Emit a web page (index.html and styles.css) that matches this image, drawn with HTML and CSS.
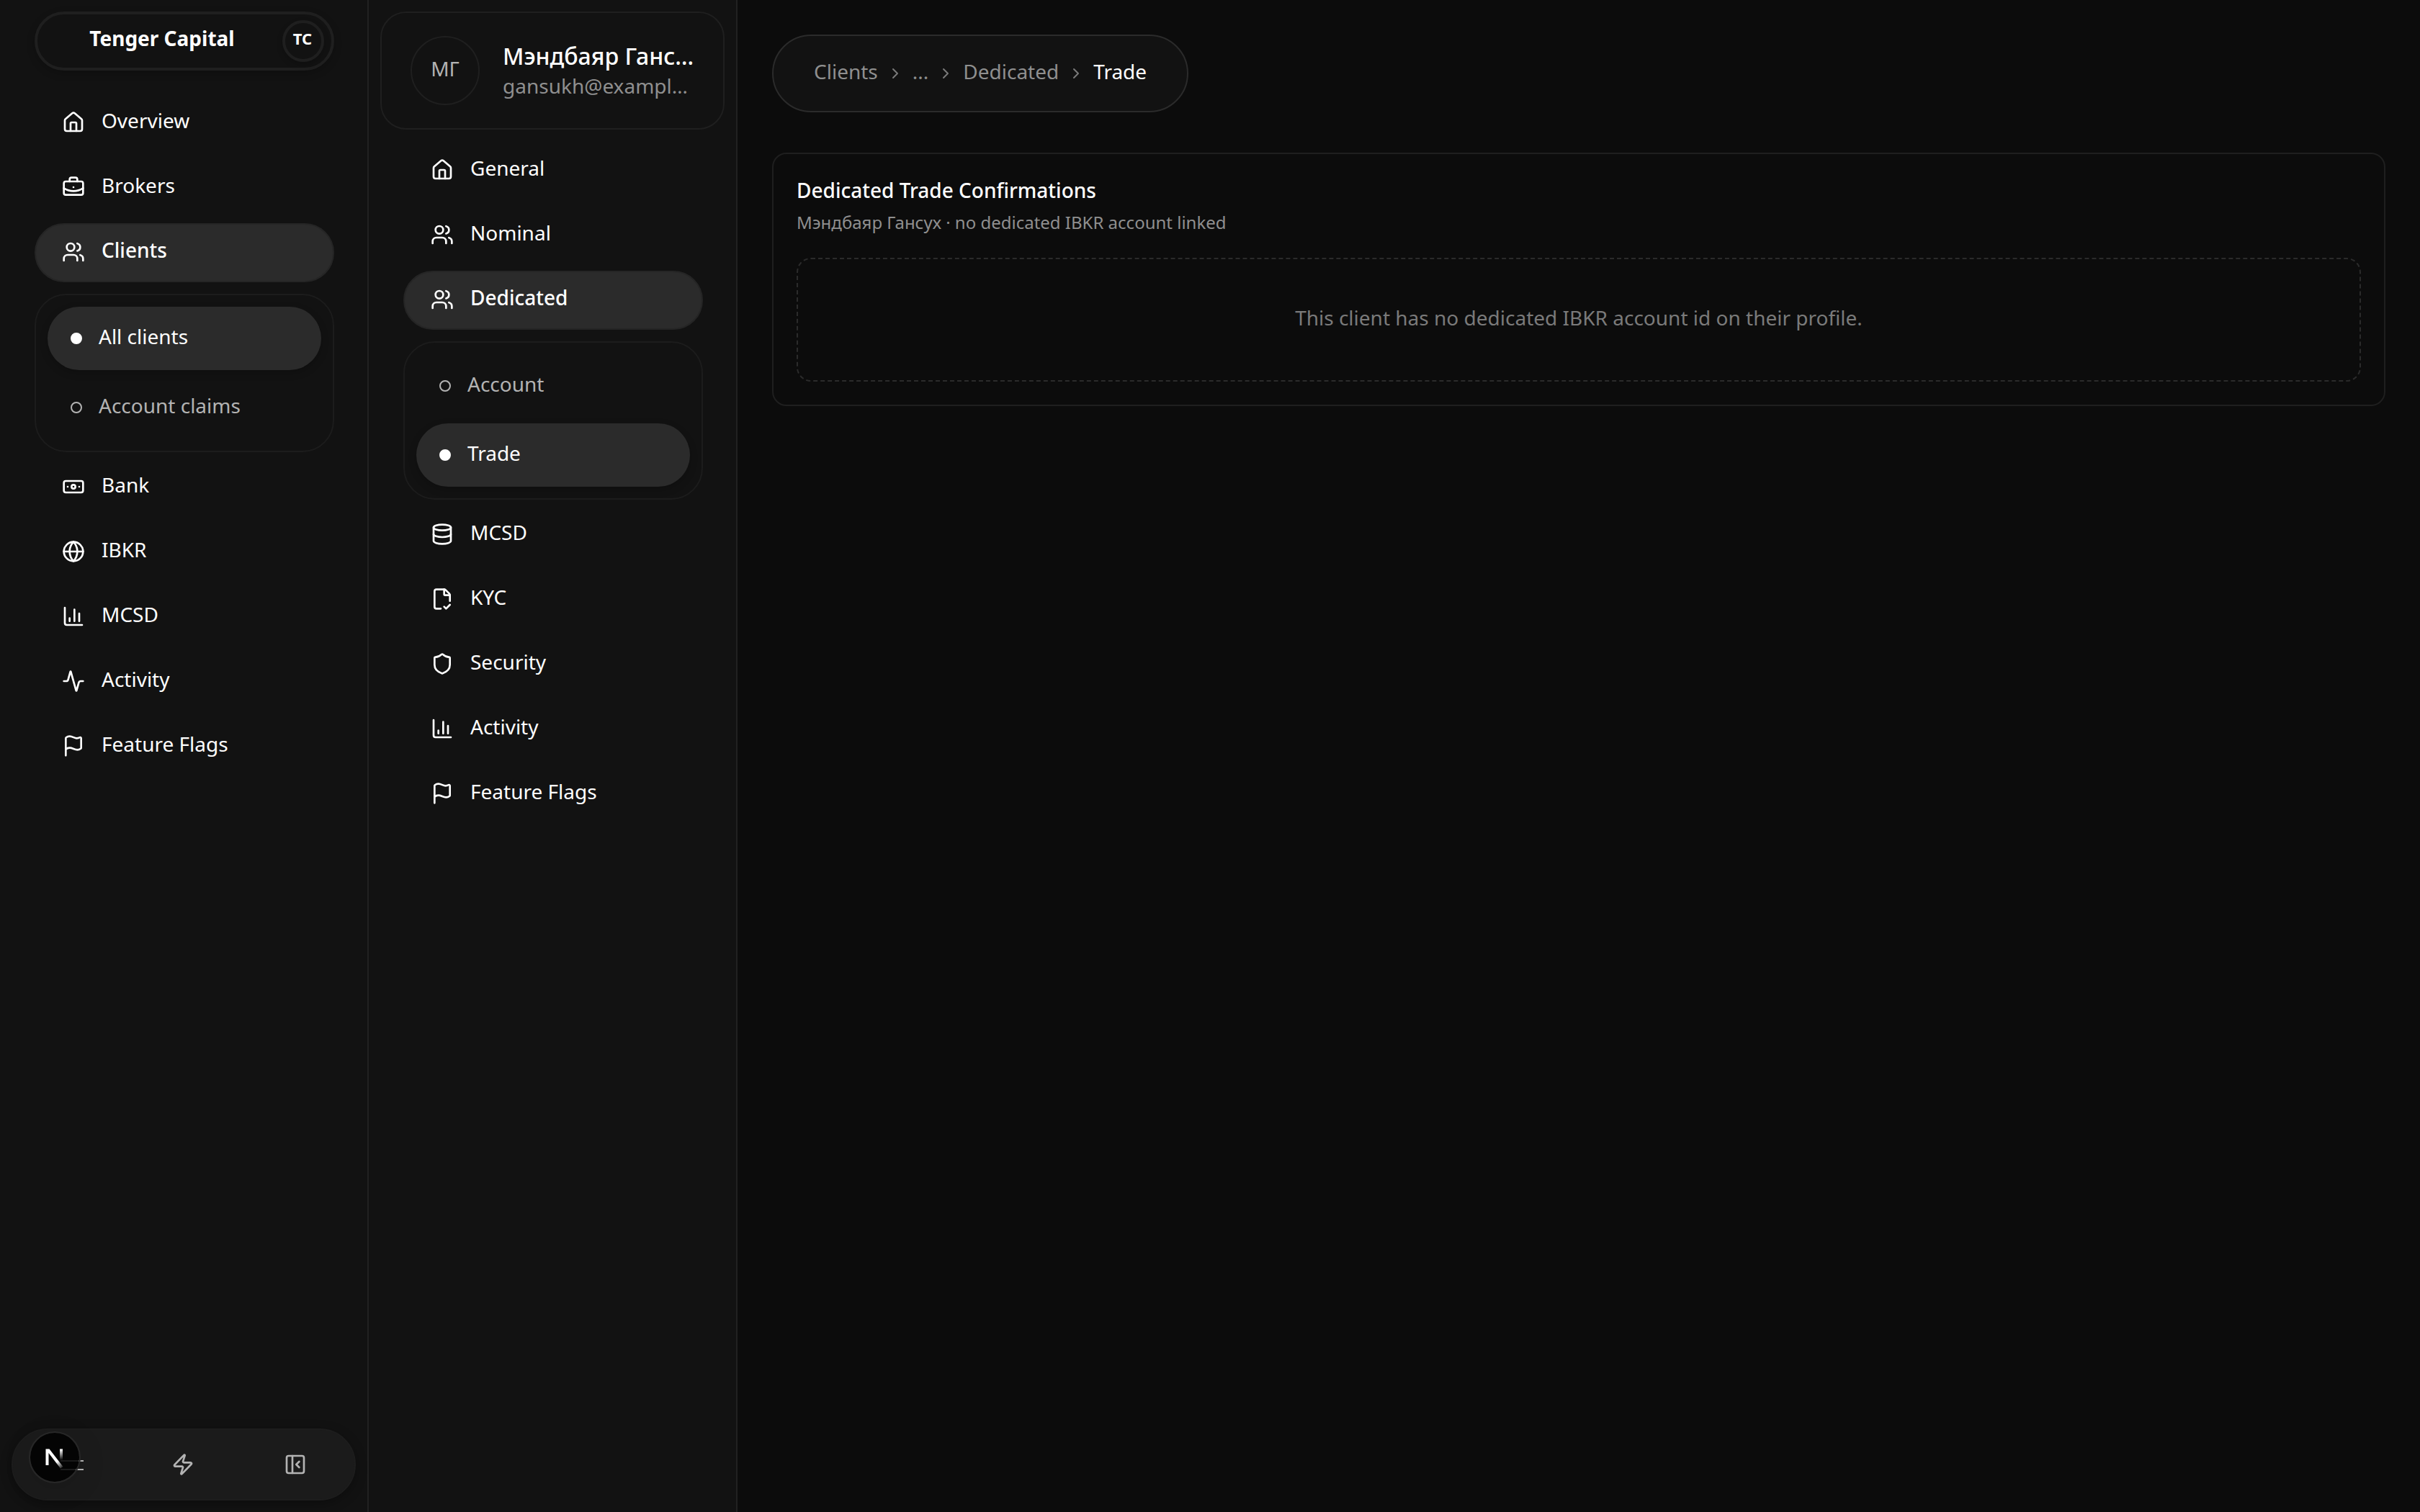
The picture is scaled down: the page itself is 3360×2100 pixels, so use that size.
FILE: index.html
```html
<!DOCTYPE html>
<html lang="en">

<head>
    <meta charset="UTF-8">
    <meta name="viewport" content="width=device-width, initial-scale=1.0">
    <title>Tenger Capital - Dedicated Trade</title>
    <link rel="stylesheet" href="styles.css">
</head>

<body>
    <!-- Shared icons -->
    <svg class="sprite" aria-hidden="true">
        <symbol id="house" viewBox="0 0 24 24">
            <path d="M15 21v-8a1 1 0 0 0-1-1h-4a1 1 0 0 0-1 1v8"/>
            <path d="M3 10a2 2 0 0 1 .709-1.528l7-5.999a2 2 0 0 1 2.582 0l7 5.999A2 2 0 0 1 21 10v9a2 2 0 0 1-2 2H5a2 2 0 0 1-2-2z"/>
        </symbol>
        <symbol id="briefcase" viewBox="0 0 24 24">
            <path d="M12 12h.01"/>
            <path d="M16 6V4a2 2 0 0 0-2-2h-4a2 2 0 0 0-2 2v2"/>
            <path d="M22 13a18.15 18.15 0 0 1-20 0"/>
            <rect width="20" height="14" x="2" y="6" rx="2"/>
        </symbol>
        <symbol id="users" viewBox="0 0 24 24">
            <path d="M16 21v-2a4 4 0 0 0-4-4H6a4 4 0 0 0-4 4v2"/>
            <circle cx="9" cy="7" r="4"/>
            <path d="M22 21v-2a4 4 0 0 0-3-3.87"/>
            <path d="M16 3.13a4 4 0 0 1 0 7.75"/>
        </symbol>
        <symbol id="banknote" viewBox="0 0 24 24">
            <rect width="20" height="12" x="2" y="6" rx="2"/>
            <circle cx="12" cy="12" r="2"/>
            <path d="M6 12h.01M18 12h.01"/>
        </symbol>
        <symbol id="globe" viewBox="0 0 24 24">
            <circle cx="12" cy="12" r="10"/>
            <path d="M12 2a14.5 14.5 0 0 0 0 20 14.5 14.5 0 0 0 0-20"/>
            <path d="M2 12h20"/>
        </symbol>
        <symbol id="chart" viewBox="0 0 24 24">
            <path d="M3 3v16a2 2 0 0 0 2 2h16"/>
            <path d="M18 17V9"/>
            <path d="M13 17V5"/>
            <path d="M8 17v-3"/>
        </symbol>
        <symbol id="activity" viewBox="0 0 24 24">
            <path d="M22 12h-2.48a2 2 0 0 0-1.93 1.46l-2.35 8.36a.25.25 0 0 1-.48 0L9.24 2.18a.25.25 0 0 0-.48 0l-2.35 8.36A2 2 0 0 1 4.49 12H2"/>
        </symbol>
        <symbol id="flag" viewBox="0 0 24 24">
            <path d="M4 22V4a1 1 0 0 1 .4-.8A6 6 0 0 1 8 2c3 0 5 2 7.333 2q2 0 3.067-.8A1 1 0 0 1 20 4v10a1 1 0 0 1-.4.8A6 6 0 0 1 16 16c-3 0-5-2-8-2a6 6 0 0 0-4 1.528"/>
        </symbol>
        <symbol id="database" viewBox="0 0 24 24">
            <ellipse cx="12" cy="5" rx="9" ry="3"/>
            <path d="M3 5v14a9 3 0 0 0 18 0V5"/>
            <path d="M3 12a9 3 0 0 0 18 0"/>
        </symbol>
        <symbol id="file-check" viewBox="0 0 24 24">
            <path d="M10.5 22H6a2 2 0 0 1-2-2V4a2 2 0 0 1 2-2h8a2.4 2.4 0 0 1 1.706.706l3.588 3.588A2.4 2.4 0 0 1 20 8v6"/>
            <path d="M14 2v5a1 1 0 0 0 1 1h5"/>
            <path d="m14 20 2 2 4-4"/>
        </symbol>
        <symbol id="shield" viewBox="0 0 24 24">
            <path d="M20 13c0 5-3.5 7.5-7.66 8.95a1 1 0 0 1-.67-.01C7.5 20.5 4 18 4 13V6a1 1 0 0 1 1-1c2 0 4.5-1.2 6.24-2.72a1.17 1.17 0 0 1 1.52 0C14.51 3.81 17 5 19 5a1 1 0 0 1 1 1z"/>
        </symbol>
        <symbol id="chevron" viewBox="0 0 24 24">
            <path d="m9 18 6-6-6-6"/>
        </symbol>
        <symbol id="zap" viewBox="0 0 24 24">
            <path d="M4 14a1 1 0 0 1-.78-1.63l9.9-10.2a.5.5 0 0 1 .86.46l-1.92 6.02A1 1 0 0 0 13 10h7a1 1 0 0 1 .78 1.63l-9.9 10.2a.5.5 0 0 1-.86-.46l1.92-6.02A1 1 0 0 0 11 14z"/>
        </symbol>
        <symbol id="panel-close" viewBox="0 0 24 24">
            <rect width="18" height="18" x="3" y="3" rx="2"/>
            <path d="M9 3v18"/>
            <path d="m16 15-3-3 3-3"/>
        </symbol>
    </svg>

    <div class="layout">
        <aside class="sidebar">
            <div class="brand">
                <span class="brand-name">Tenger Capital</span>
                <span class="brand-badge"><span>TC</span></span>
            </div>
            <nav class="nav">
                <a class="nav-item"><svg class="icon"><use href="#house"/></svg><span>Overview</span></a>
                <a class="nav-item"><svg class="icon"><use href="#briefcase"/></svg><span>Brokers</span></a>
                <a class="nav-item active"><svg class="icon"><use href="#users"/></svg><span>Clients</span></a>
                <div class="submenu">
                    <a class="sub-item active"><i class="dot"></i><span>All clients</span></a>
                    <a class="sub-item"><i class="dot"></i><span>Account claims</span></a>
                </div>
                <a class="nav-item"><svg class="icon"><use href="#banknote"/></svg><span>Bank</span></a>
                <a class="nav-item"><svg class="icon"><use href="#globe"/></svg><span>IBKR</span></a>
                <a class="nav-item"><svg class="icon"><use href="#chart"/></svg><span>MCSD</span></a>
                <a class="nav-item"><svg class="icon"><use href="#activity"/></svg><span>Activity</span></a>
                <a class="nav-item"><svg class="icon"><use href="#flag"/></svg><span>Feature Flags</span></a>
            </nav>
            <div class="dock">
                <button><svg class="icon menu-icon" viewBox="0 0 32 32"><path d="M2 11h32M2 23h32"/></svg></button>
                <button><svg class="icon"><use href="#zap"/></svg></button>
                <button><svg class="icon"><use href="#panel-close"/></svg></button>
                <div class="dev-badge">
                    <svg viewBox="0 0 72 72">
                        <defs>
                            <linearGradient id="fadeDiag" gradientUnits="userSpaceOnUse" x1="39" y1="42" x2="47" y2="52">
                                <stop stop-color="#fff"/>
                                <stop offset="1" stop-color="#fff" stop-opacity="0"/>
                            </linearGradient>
                            <linearGradient id="fadeBar" gradientUnits="userSpaceOnUse" x1="0" y1="25" x2="0" y2="40">
                                <stop stop-color="#fff"/>
                                <stop offset="1" stop-color="#fff" stop-opacity="0"/>
                            </linearGradient>
                        </defs>
                        <path d="M23.500 24.500h5L47.500 49l-3.500 2.500L27.500 30V47h-4z" fill="url(#fadeDiag)"/>
                        <path d="M43 24.500h4v16h-4z" fill="url(#fadeBar)"/>
                    </svg>
                </div>
            </div>
        </aside>

        <aside class="sidebar">
            <div class="profile">
                <div class="avatar"><span>МГ</span></div>
                <div class="profile-text">
                    <div class="profile-name">Мэндбаяр Гансух</div>
                    <div class="profile-email">gansukh@example.com</div>
                </div>
            </div>
            <nav class="nav">
                <a class="nav-item"><svg class="icon"><use href="#house"/></svg><span>General</span></a>
                <a class="nav-item"><svg class="icon"><use href="#users"/></svg><span>Nominal</span></a>
                <a class="nav-item active"><svg class="icon"><use href="#users"/></svg><span>Dedicated</span></a>
                <div class="submenu">
                    <a class="sub-item"><i class="dot"></i><span>Account</span></a>
                    <a class="sub-item active"><i class="dot"></i><span>Trade</span></a>
                </div>
                <a class="nav-item"><svg class="icon"><use href="#database"/></svg><span>MCSD</span></a>
                <a class="nav-item"><svg class="icon"><use href="#file-check"/></svg><span>KYC</span></a>
                <a class="nav-item"><svg class="icon"><use href="#shield"/></svg><span>Security</span></a>
                <a class="nav-item"><svg class="icon"><use href="#chart"/></svg><span>Activity</span></a>
                <a class="nav-item"><svg class="icon"><use href="#flag"/></svg><span>Feature Flags</span></a>
            </nav>
        </aside>

        <main class="main">
            <div class="breadcrumb">
                <span>Clients</span>
                <svg class="icon"><use href="#chevron"/></svg>
                <span>...</span>
                <svg class="icon"><use href="#chevron"/></svg>
                <span>Dedicated</span>
                <svg class="icon"><use href="#chevron"/></svg>
                <span class="current">Trade</span>
            </div>
            <section class="card">
                <h1>Dedicated Trade Confirmations</h1>
                <p class="subtitle">Мэндбаяр Гансух · no dedicated IBKR account linked</p>
                <div class="empty">This client has no dedicated IBKR account id on their profile.</div>
            </section>
        </main>
    </div>
</body>

</html>
```
FILE: styles.css
```css
* {
    box-sizing: border-box;
}

body {
    margin: 0;
    background: #0c0c0c;
    color: #fff;
    font-family: "Noto Sans", sans-serif;
    font-size: 28px;
    line-height: 40px;
}

.sprite {
    display: none;
}

.icon {
    width: 32px;
    height: 32px;
    flex-shrink: 0;
    fill: none;
    stroke: currentColor;
    stroke-width: 2;
    stroke-linecap: round;
    stroke-linejoin: round;
}

.layout {
    display: flex;
    height: 100vh;
}

/* Sidebars */
.sidebar {
    display: flex;
    flex-direction: column;
    flex-shrink: 0;
    width: 512px;
    padding: 16px;
    background: #121212;
    border-right: 2px solid #212121;
}

.brand {
    display: flex;
    align-items: center;
    height: 82px;
    margin: 0 30px 32px 32px;
    padding: 0 10px;
    border: 4px solid #1f1f1f;
    border-radius: 41px;
    box-shadow: 0 4px 12px rgba(0, 0, 0, 0.2);
}

.brand-name {
    flex: 1;
    padding: 0 4px 8px 0;
    font-weight: 700;
    text-align: center;
}

.brand-badge {
    display: flex;
    align-items: center;
    justify-content: center;
    width: 58px;
    height: 58px;
    border: 4px solid #1f1f1f;
    border-radius: 50%;
    font-size: 22px;
    font-weight: 700;
    box-shadow: 0 4px 8px rgba(0, 0, 0, 0.2);
}

.brand-badge span {
    padding: 0 2px 8px 0;
}

.avatar span {
    padding-bottom: 6px;
}

.nav {
    display: flex;
    flex-direction: column;
    gap: 8px;
    margin: 0 30px 0 32px;
}

.nav-item {
    display: flex;
    align-items: center;
    gap: 23px;
    height: 82px;
    padding: 0 34px;
    border: 4px solid transparent;
    border-radius: 41px;
}

.nav-item span {
    padding-bottom: 9px;
}

.nav-item .icon {
    margin-top: -2px;
}

.nav-item.active {
    background: #2b2b2b;
    border: 2px solid #252525;
    padding: 0 36px;
    font-weight: 500;
}

.submenu {
    display: flex;
    flex-direction: column;
    gap: 8px;
    margin-top: 8px;
    padding: 16px;
    border: 2px solid #1c1c1c;
    border-radius: 44px;
}

.sub-item {
    display: flex;
    align-items: center;
    gap: 23px;
    height: 88px;
    padding: 0 32px;
    border-radius: 44px;
    color: #b3b3b3;
}

.sub-item span {
    padding-bottom: 7px;
}

.sub-item.active {
    background: #2b2b2b;
    color: #fff;
    box-shadow: 0 4px 12px rgba(0, 0, 0, 0.2);
}

.dot {
    width: 16px;
    height: 16px;
    border: 2px solid currentColor;
    border-radius: 50%;
}

.active .dot {
    background: currentColor;
}

/* Bottom toolbar */
.dock {
    position: relative;
    display: flex;
    align-items: center;
    justify-content: space-between;
    height: 100px;
    margin-top: auto;
    padding: 0 66px 0 64px;
    background: #1b1b1b;
    border: 2px solid #1d1d1d;
    border-radius: 50px;
    box-shadow: 0 4px 16px rgba(0, 0, 0, 0.3);
}

.dock button {
    display: flex;
    padding: 0;
    border: none;
    background: none;
    color: #b3b3b3;
}

.menu-icon {
    overflow: visible;
    stroke-linecap: butt;
}

/* Floats over the toolbar */
.dev-badge {
    position: absolute;
    top: 2px;
    left: 22px;
    width: 72px;
    height: 72px;
    background: rgba(0, 0, 0, 0.85);
    background-clip: padding-box;
    border: 2px solid #272727;
    border-radius: 50%;
    box-shadow: 0 8px 40px rgba(0, 0, 0, 0.1);
}

.dev-badge svg {
    display: block;
    margin: -2px;
    width: 72px;
    height: 72px;
}

/* Client profile */
.profile {
    display: flex;
    align-items: center;
    gap: 32px;
    height: 164px;
    margin-bottom: 16px;
    padding: 0 40px;
    border: 2px solid #1f1f1f;
    border-radius: 36px;
}

.avatar {
    display: flex;
    align-items: center;
    justify-content: center;
    flex-shrink: 0;
    width: 96px;
    height: 96px;
    border: 2px solid #1f1f1f;
    border-radius: 50%;
    color: #b3b3b3;
}

.profile-text {
    min-width: 0;
}

.profile-name,
.profile-email {
    overflow: hidden;
    text-overflow: ellipsis;
    white-space: nowrap;
}

.profile-name {
    font-size: 32px;
    font-weight: 500;
}

.profile-email {
    padding-top: 1px;
    color: #8f8f8f;
}

/* Main content */
.main {
    flex: 1;
    min-width: 0;
    padding: 48px;
}

.breadcrumb {
    display: flex;
    align-items: center;
    gap: 12px;
    width: fit-content;
    height: 108px;
    margin-bottom: 56px;
    padding: 0 56px;
    background: #121212;
    border: 2px solid #2b2b2b;
    border-radius: 54px;
    color: #8f8f8f;
}

.breadcrumb span {
    padding-bottom: 6px;
}

.breadcrumb .icon {
    width: 24px;
    height: 24px;
    color: #7a7a7a;
}

.breadcrumb .current {
    color: #fff;
}

.card {
    height: 352px;
    padding: 32px;
    border: 2px solid #1f1f1f;
    border-radius: 20px;
}

.card h1 {
    margin: -2px 0 9px;
    font-size: 28px;
    font-weight: 500;
    line-height: 40px;
}

.subtitle {
    margin: 0 0 33px;
    color: #8f8f8f;
    font-size: 24px;
    line-height: 32px;
}

.empty {
    height: 172px;
    padding: 61px 32px;
    border: 2px dashed #2b2b2b;
    border-radius: 20px;
    color: #7a7a7a;
    text-align: center;
}
```
